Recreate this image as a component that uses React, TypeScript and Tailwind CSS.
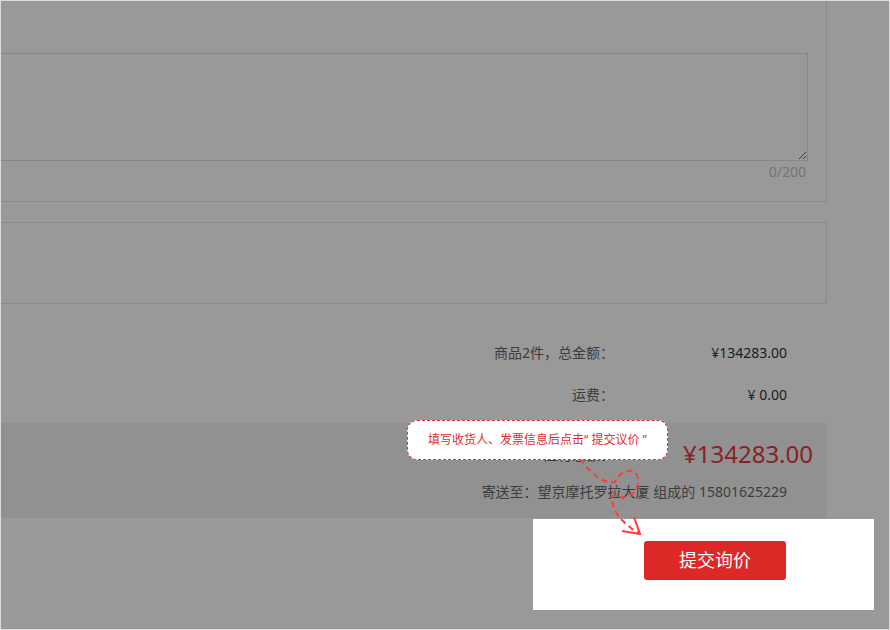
import React from 'react';

const font = { fontFamily: '"Noto Sans", "Noto Sans CJK SC", sans-serif' };

export default function App() {
  return (
    <div
      className="relative h-[630px] w-[890px] border border-[#dcdcdc] bg-white"
      style={font}
    >
      <div className="relative h-full w-full overflow-hidden">
        {/* 页面内容（已滚动） */}
        <div className="-ml-[40px] -mt-[40px] flex w-[866px] flex-col">
          {/* 备注 */}
          <div className="border border-[#e6e6e6] pl-[20px] pr-[18px] pt-[91px] pb-[18px]">
            <textarea className="block h-[108px] w-full border border-[#dcdfe6] bg-white" />
            <div className="h-[22px] pr-[2px] text-right text-[14px] leading-[22px] text-[#c0c4cc]">
              0/200
            </div>
          </div>

          {/* 发票 */}
          <div className="mt-[20px] h-[82px] border border-[#e6e6e6]" />

          {/* 金额 */}
          <div className="mt-[27px] flex h-[42px] items-center justify-end pr-[40px] text-[14px]">
            <span className="text-[#666]">商品2件，总金额：</span>
            <span className="w-[173px] text-right text-[#333]">¥134283.00</span>
          </div>
          <div className="flex h-[42px] items-center justify-end pr-[40px] text-[14px]">
            <span className="text-[#666]">运费：</span>
            <span className="w-[173px] text-right text-[#333]">¥ 0.00</span>
          </div>

          <div className="mt-[8px] flex h-[95px] flex-col bg-[#f2f2f2] pt-[13px]">
            <div className="flex h-[36px] items-center justify-end pr-[14px]">
              <span className="text-[14px] text-[#666]">应付总额：</span>
              <span className="w-[199px] text-right text-[24px] text-[#e23a3a]">
                ¥134283.00
              </span>
            </div>
            <div className="mt-[9px] flex h-[20px] items-center justify-end pr-[40px] text-[14px] text-[#666]">
              寄送至：望京摩托罗拉大厦 组成的 15801625229
            </div>
          </div>

          <div className="mt-[23px] flex justify-end pr-[40px]">
            <button className="h-[39px] w-[142px] rounded-[3px] bg-[#dd2828] text-[18px] text-white">
              提交询价
            </button>
          </div>
        </div>

        {/* 引导遮罩 */}
        <div className="absolute inset-0 bg-black/40" />

        <div className="absolute left-[532px] top-[518px] h-[91px] w-[341px] bg-white">
          <button className="ml-[111px] mt-[22px] h-[39px] w-[142px] rounded-[3px] bg-[#dd2828] text-[18px] text-white">
            提交询价
          </button>
        </div>

        <div className="absolute left-[406px] top-[419px] flex h-[40px] w-[261px] items-center justify-center rounded-[10px] border border-dashed border-[#e02d2d] bg-white text-[12px] text-[#e02d2d]">
          填写收货人、发票信息后点击“ 提交议价 ”
        </div>

        <svg
          className="pointer-events-none absolute left-0 top-0"
          width="888"
          height="628"
          viewBox="1 1 888 628"
          fill="none"
        >
          <path
            d="M580 459 C592 475 604 484 615 482 C621 468 640 466 638 483 C636 498 620 500 614 494 C610 500 614 512 622 520 C628 526 634 531 640 534"
            stroke="#ff3b3b"
            strokeWidth="2"
            strokeDasharray="6 4"
          />
          <path d="M622 531 L640 534 L634 517" stroke="#ff3b3b" strokeWidth="2" />
        </svg>
      </div>
    </div>
  );
}
